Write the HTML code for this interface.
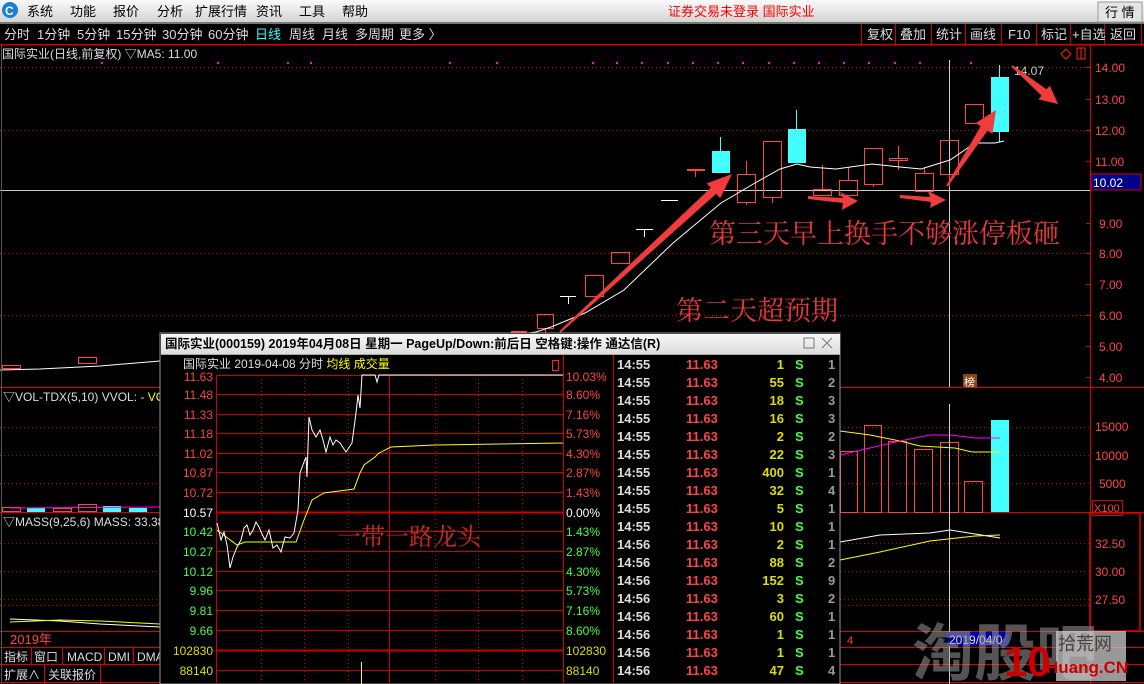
<!DOCTYPE html>
<html><head><meta charset="utf-8"><style>
html,body{margin:0;padding:0;background:#000;width:1144px;height:684px;overflow:hidden}
svg{display:block}
text{font-family:"Liberation Sans","Noto Sans CJK SC",sans-serif}
</style></head><body>
<svg width="1144" height="684" xmlns="http://www.w3.org/2000/svg">
<defs>
<linearGradient id="mg" x1="0" y1="0" x2="0" y2="1"><stop offset="0" stop-color="#fafafa"/><stop offset="1" stop-color="#d4d4d4"/></linearGradient>
<linearGradient id="tg" x1="0" y1="0" x2="0" y2="1"><stop offset="0" stop-color="#f8f8f8"/><stop offset="1" stop-color="#dcdcdc"/></linearGradient>
</defs>
<rect width="1144" height="684" fill="#000"/>
<rect x="0" y="0" width="1144" height="22" fill="url(#mg)"/>
<rect x="0" y="22" width="1144" height="2" fill="#777"/>
<circle cx="10" cy="10" r="8" fill="#1a7fd0"/><text x="5" y="15" font-size="12" font-weight="bold" fill="#fff">C</text>
<g font-size="13" fill="#000">
<text x="27" y="16">系统</text><text x="70" y="16">功能</text><text x="113" y="16">报价</text><text x="157" y="16">分析</text><text x="195" y="16">扩展行情</text><text x="256" y="16">资讯</text><text x="299" y="16">工具</text><text x="342" y="16">帮助</text>
</g>
<text x="668" y="16" font-size="13" fill="#f00">证券交易未登录 国际实业</text>
<rect x="1098" y="2" width="44" height="20" fill="#e4e4e4" stroke="#999"/>
<text x="1105" y="17" font-size="13" fill="#000">行 情</text>
<g font-size="13" fill="#ddd">
<text x="4" y="39">分时</text><text x="37" y="39">1分钟</text><text x="77" y="39">5分钟</text><text x="116" y="39">15分钟</text><text x="162" y="39">30分钟</text><text x="208" y="39">60分钟</text><text x="255" y="39" fill="#3ff">日线</text><text x="289" y="39">周线</text><text x="322" y="39">月线</text><text x="355" y="39">多周期</text><text x="399" y="39">更多 〉</text>
</g>
<g stroke="#c00" stroke-width="1">
<line x1="861.5" y1="24" x2="861.5" y2="44"/><line x1="895.5" y1="24" x2="895.5" y2="44"/><line x1="931.5" y1="24" x2="931.5" y2="44"/><line x1="965.5" y1="24" x2="965.5" y2="44"/><line x1="1001.5" y1="24" x2="1001.5" y2="44"/><line x1="1036.5" y1="24" x2="1036.5" y2="44"/><line x1="1070.5" y1="24" x2="1070.5" y2="44"/><line x1="1104.5" y1="24" x2="1104.5" y2="44"/><line x1="1141.5" y1="24" x2="1141.5" y2="44"/>
</g>
<g font-size="13" fill="#ddd">
<text x="867" y="39">复权</text><text x="900" y="39">叠加</text><text x="936" y="39">统计</text><text x="970" y="39">画线</text><text x="1008" y="39">F10</text><text x="1041" y="39">标记</text><text x="1072" y="39">+自选</text><text x="1110" y="39">返回</text>
</g>
<rect x="0" y="44" width="1144" height="1.5" fill="#d00"/>
<text x="2" y="58" font-size="12" fill="#ddd">国际实业(日线,前复权) ▽MA5: 11.00</text>
<path d="M1066 49 l5 5 -5 5 -5 -5z" fill="none" stroke="#f22"/>
<rect x="1077" y="48" width="8" height="11" fill="none" stroke="#f22"/><line x1="1081" y1="48" x2="1081" y2="59" stroke="#f22"/>
<g fill="#f0f">
<rect x="101" y="62" width="2" height="2"/><rect x="217" y="62" width="2" height="2"/><rect x="287" y="62" width="2" height="2"/><rect x="310" y="62" width="2" height="2"/><rect x="449" y="62" width="2" height="2"/><rect x="496" y="62" width="2" height="2"/><rect x="592" y="62" width="2" height="2"/><rect x="616" y="62" width="2" height="2"/><rect x="641" y="62" width="2" height="2"/><rect x="667" y="62" width="2" height="2"/><rect x="692" y="62" width="2" height="2"/><rect x="717" y="62" width="2" height="2"/><rect x="742" y="62" width="2" height="2"/><rect x="768" y="62" width="2" height="2"/><rect x="793" y="62" width="2" height="2"/><rect x="818" y="62" width="2" height="2"/><rect x="843" y="62" width="2" height="2"/><rect x="868" y="62" width="2" height="2"/><rect x="894" y="62" width="2" height="2"/><rect x="919" y="62" width="2" height="2"/><rect x="970" y="62" width="2" height="2"/>
</g>
<g stroke="#c00" stroke-dasharray="1,3">
<line x1="0" y1="67.5" x2="1090" y2="67.5"/><line x1="0" y1="130.5" x2="1090" y2="130.5"/><line x1="0" y1="253.5" x2="1090" y2="253.5"/><line x1="0" y1="315.5" x2="1090" y2="315.5"/>
</g>
<line x1="1090.5" y1="45" x2="1090.5" y2="684" stroke="#d00"/>
<g font-size="12" fill="#f44">
<text x="1095" y="72">14.00</text><text x="1095" y="104">13.00</text><text x="1095" y="135">12.00</text><text x="1095" y="166">11.00</text><text x="1099" y="228">9.00</text><text x="1099" y="258">8.00</text><text x="1099" y="289">7.00</text><text x="1099" y="320">6.00</text><text x="1099" y="351">5.00</text><text x="1099" y="382">4.00</text>
<text x="1095" y="431">15000</text><text x="1095" y="460">10000</text><text x="1099" y="488">5000</text>
<text x="1095" y="548">32.50</text><text x="1095" y="576">30.00</text><text x="1095" y="604">27.50</text>
</g>
<g stroke="#d00"><line x1="1086" y1="67.5" x2="1090" y2="67.5"/><line x1="1086" y1="99.5" x2="1090" y2="99.5"/><line x1="1086" y1="130.5" x2="1090" y2="130.5"/><line x1="1086" y1="161.5" x2="1090" y2="161.5"/><line x1="1086" y1="223.5" x2="1090" y2="223.5"/><line x1="1086" y1="253.5" x2="1090" y2="253.5"/><line x1="1086" y1="284.5" x2="1090" y2="284.5"/><line x1="1086" y1="315.5" x2="1090" y2="315.5"/><line x1="1086" y1="346.5" x2="1090" y2="346.5"/><line x1="1086" y1="377.5" x2="1090" y2="377.5"/></g>
<line x1="0" y1="190.5" x2="1090" y2="190.5" stroke="#ccc"/>
<line x1="949.5" y1="60" x2="949.5" y2="388" stroke="#ccc"/>
<rect x="1091" y="174" width="50" height="16" fill="#00008b" stroke="#d00"/>
<text x="1093" y="187" font-size="12" fill="#fff">10.02</text>
<g fill="none" stroke="#f44">
<rect x="2.5" y="365.5" width="18" height="3"/><rect x="78.5" y="357.5" width="18" height="6"/>
<rect x="537.5" y="314.5" width="16" height="14"/><line x1="545.5" y1="328" x2="545.5" y2="333"/>
<rect x="585.5" y="275.5" width="18" height="21"/><rect x="611.5" y="252.5" width="18" height="11"/>
<rect x="737.5" y="174.5" width="18" height="28"/><line x1="746.5" y1="161" x2="746.5" y2="174"/><line x1="746.5" y1="202" x2="746.5" y2="205"/>
<rect x="763.5" y="141.5" width="18" height="56"/><line x1="772.5" y1="197" x2="772.5" y2="203"/>
<rect x="813.5" y="189.5" width="18" height="6"/><line x1="822.5" y1="165" x2="822.5" y2="189"/>
<rect x="839.5" y="180.5" width="18" height="15"/><line x1="848.5" y1="167" x2="848.5" y2="180"/>
<rect x="864.5" y="148.5" width="18" height="36"/><line x1="873.5" y1="184" x2="873.5" y2="187"/>
<rect x="889.5" y="158.5" width="18" height="2"/><line x1="898.5" y1="146" x2="898.5" y2="158"/><line x1="898.5" y1="161" x2="898.5" y2="170"/>
<rect x="915.5" y="173.5" width="18" height="18"/><line x1="924.5" y1="168" x2="924.5" y2="173"/>
<rect x="940.5" y="140.5" width="18" height="34"/><line x1="949.5" y1="174" x2="949.5" y2="187"/>
<rect x="965.5" y="104.5" width="18" height="19"/>
</g>
<g fill="#f44"><rect x="687" y="169" width="18" height="2"/><rect x="695" y="170" width="1" height="7"/><rect x="511" y="331" width="16" height="2"/></g>
<g stroke="#fff" fill="none">
<line x1="560" y1="296.5" x2="576" y2="296.5"/><line x1="568.5" y1="296" x2="568.5" y2="304"/>
<line x1="636" y1="229.5" x2="653" y2="229.5"/><line x1="644.5" y1="229" x2="644.5" y2="237"/>
<line x1="661" y1="200.5" x2="678" y2="200.5"/>
</g>
<g fill="#4ff">
<rect x="712" y="151" width="18" height="22"/><rect x="720" y="137" width="1" height="14"/>
<rect x="788" y="129" width="18" height="34"/><rect x="796" y="110" width="1" height="19"/>
<rect x="991" y="77" width="18" height="55"/><rect x="999" y="65" width="1" height="12"/><rect x="999" y="132" width="1" height="10"/>
</g>
<text x="1014" y="75" font-size="12" fill="#ccc">14.07</text>
<polyline fill="none" stroke="#fff" stroke-width="1" points="0,370 40,369 100,366 160,361 300,352 440,342 500,337 536,332 551,327 585,313 624,290 673,243 721,203 755,183 780,169 797,164 810,167 836,169 872,164 900,167 921,169 950,160 975,143 995,143 1004,141"/>
<text x="709" y="243" font-size="27" fill="#e8383a" style="font-family:'Liberation Serif','Noto Serif CJK SC',serif">第三天早上换手不够涨停板砸</text>
<text x="676" y="320" font-size="27" fill="#e8383a" style="font-family:'Liberation Serif','Noto Serif CJK SC',serif">第二天超预期</text>
<g fill="#f03c3c">
<polygon points="560.7,332.7 716.2,193.8 720.2,198.2 732,174 706.8,183.4 710.8,187.8 559.3,331.3"/>
<polygon points="947.8,186.5 987.5,130.7 992.5,133.9 996,110 975.7,123.1 980.7,126.3 946.2,185.5"/>
<polygon points="1011.4,66.8 1041.6,95.6 1038.4,99.4 1058,104 1049.8,85.6 1046.6,89.4 1012.6,65.2"/>
<polygon points="808,196 843,198 840,192 858,201 842,210 843,203 808,199"/>
<polygon points="900,195 930,197 928,191 946,200 930,208 931,202 900,198"/>
</g>
<rect x="963" y="374" width="14" height="14" fill="#8b4513"/>
<text x="964" y="386" font-size="11" fill="#fff">榜</text>
<line x1="0" y1="387.5" x2="1144" y2="387.5" stroke="#d00"/>
<line x1="0" y1="512.5" x2="1144" y2="512.5" stroke="#d00"/>
<line x1="0" y1="631.5" x2="1144" y2="631.5" stroke="#d00"/>
<line x1="0" y1="647.5" x2="1144" y2="647.5" stroke="#d00"/>
<line x1="0" y1="664.5" x2="1144" y2="664.5" stroke="#d00"/>
<line x1="0" y1="682.5" x2="1144" y2="682.5" stroke="#d00"/>
<line x1="1.5" y1="45" x2="1.5" y2="684" stroke="#555"/>
<g stroke="#c00" stroke-dasharray="1,3">
<line x1="0" y1="427.5" x2="1090" y2="427.5"/><line x1="0" y1="455.5" x2="1090" y2="455.5"/><line x1="0" y1="483.5" x2="1090" y2="483.5"/>
<line x1="0" y1="543.5" x2="1090" y2="543.5"/><line x1="0" y1="571.5" x2="1090" y2="571.5"/><line x1="0" y1="599.5" x2="1090" y2="599.5"/><line x1="0" y1="605.5" x2="1090" y2="605.5"/>
</g>
<text x="3" y="401" font-size="12" fill="#ddd">▽VOL-TDX(5,10) VVOL: -  <tspan fill="#ff0">VO</tspan></text>
<text x="3" y="526" font-size="12" fill="#ddd">▽MASS(9,25,6) MASS: 33.38</text>
<g fill="none" stroke="#f44"><rect x="2.5" y="507.5" width="18" height="4"/><rect x="78.5" y="504.5" width="18" height="7"/><rect x="53.5" y="508.5" width="18" height="3"/></g>
<g fill="#4ff"><rect x="27" y="508" width="18" height="4"/><rect x="103" y="506" width="18" height="6"/><rect x="129" y="508" width="18" height="4"/></g>
<line x1="10" y1="508" x2="160" y2="507" stroke="#f0f"/>
<polyline points="10,619 60,621 100,624 160,627" fill="none" stroke="#fff"/>
<polyline points="10,622 60,620 100,621 160,624" fill="none" stroke="#ff0"/>
<text x="10" y="644" font-size="13" fill="#f44">2019年</text>
<g stroke="#d00"><line x1="31.5" y1="647" x2="31.5" y2="664"/><line x1="62.5" y1="647" x2="62.5" y2="664"/><line x1="104.5" y1="647" x2="104.5" y2="664"/><line x1="133.5" y1="647" x2="133.5" y2="664"/><line x1="44.5" y1="664" x2="44.5" y2="684"/><line x1="100.5" y1="664" x2="100.5" y2="684"/></g>
<g font-size="12" fill="#ddd"><text x="4" y="661">指标</text><text x="34" y="661">窗口</text><text x="67" y="661">MACD</text><text x="108" y="661">DMI</text><text x="137" y="661">DMA</text><text x="4" y="679">扩展∧</text><text x="48" y="679">关联报价</text></g>
<g fill="none" stroke="#f44">
<rect x="840.5" y="451.5" width="17" height="61"/><rect x="864.5" y="425.5" width="17" height="87"/><rect x="888.5" y="441.5" width="18" height="71"/><rect x="914.5" y="449.5" width="18" height="63"/><rect x="940.5" y="442.5" width="18" height="70"/><rect x="964.5" y="481.5" width="18" height="31"/>
</g>
<rect x="991" y="420" width="18" height="92" fill="#4ff"/>
<polyline points="840,431 870,435 900,441 920,446 955,448 972,452 1000,452" fill="none" stroke="#ff0"/>
<polyline points="840,455 870,448 900,441 930,435 950,435 975,438 1000,438" fill="none" stroke="#f0f"/>
<rect x="1092.5" y="500.5" width="30" height="15" fill="none" stroke="#d00"/>
<text x="1094" y="512" font-size="11" fill="#f44">X100</text>
<polyline points="840,542 880,535 930,533 950,530 975,534 1000,538" fill="none" stroke="#fff"/>
<polyline points="840,560 880,552 930,541 975,536 1000,535" fill="none" stroke="#ff0"/>
<line x1="949.5" y1="404" x2="949.5" y2="684" stroke="#ccc"/>
<rect x="1090" y="513" width="50" height="118" fill="none" stroke="#d00" stroke-width="1.5"/>
<rect x="947" y="632" width="62" height="14" fill="#0000a0"/>
<text x="949" y="644" font-size="12" fill="#ddd">2019/04/0</text>
<text x="847" y="644" font-size="11" fill="#f44">4</text>
<text x="912" y="675" font-size="62" fill="#999" opacity="0.55" font-weight="bold">淘股吧</text>
<rect x="1056" y="631" width="70" height="50" fill="#ccc" opacity="0.75"/>
<text x="1004" y="676" font-size="42" font-weight="bold" fill="#c00">10</text>
<text x="1058" y="650" font-size="18" fill="#444">拾荒网</text>
<text x="1046" y="673" font-size="17" font-weight="bold" fill="#c00">Huang.CN</text>
<rect x="160" y="333" width="680" height="351" fill="#000" stroke="#999"/>
<rect x="161" y="334" width="679" height="20" fill="url(#tg)"/>
<text x="165" y="348" font-size="12.5" font-weight="bold" fill="#000">国际实业(000159) 2019年04月08日 星期一 PageUp/Down:前后日 空格键:操作 通达信(R)</text>
<rect x="804" y="338" width="10" height="10" fill="none" stroke="#777"/>
<path d="M822 338 l10 10 M832 338 l-10 10" stroke="#777"/>
<line x1="161" y1="354.5" x2="840" y2="354.5" stroke="#aaa"/>
<text x="183" y="368" font-size="12" fill="#ddd">国际实业  2019-04-08 分时 <tspan fill="#ff0">均线 成交量</tspan></text>
<rect x="552.5" y="360.5" width="6" height="10" fill="none" stroke="#f22"/>
<g stroke="#c00">
<line x1="216" y1="375.5" x2="563" y2="375.5"/><line x1="216" y1="394.5" x2="563" y2="394.5"/><line x1="216" y1="414.5" x2="563" y2="414.5"/><line x1="216" y1="433.5" x2="563" y2="433.5"/><line x1="216" y1="453.5" x2="563" y2="453.5"/><line x1="216" y1="472.5" x2="563" y2="472.5"/><line x1="216" y1="492.5" x2="563" y2="492.5"/><line x1="216" y1="512.5" x2="563" y2="512.5" stroke-width="2"/><line x1="216" y1="531.5" x2="563" y2="531.5"/><line x1="216" y1="551.5" x2="563" y2="551.5"/><line x1="216" y1="571.5" x2="563" y2="571.5"/><line x1="216" y1="590.5" x2="563" y2="590.5"/><line x1="216" y1="610.5" x2="563" y2="610.5"/><line x1="216" y1="630.5" x2="563" y2="630.5"/><line x1="216" y1="650.5" x2="563" y2="650.5" stroke-width="2"/><line x1="216" y1="670.5" x2="563" y2="670.5"/>
<line x1="216.5" y1="375" x2="216.5" y2="684"/><line x1="563.5" y1="355" x2="563.5" y2="684"/><line x1="389.5" y1="375" x2="389.5" y2="684"/>
</g>
<g stroke="#c00" stroke-dasharray="1,3"><line x1="261.5" y1="375" x2="261.5" y2="684"/><line x1="304.5" y1="375" x2="304.5" y2="684"/><line x1="348.5" y1="375" x2="348.5" y2="684"/><line x1="435.5" y1="375" x2="435.5" y2="684"/><line x1="478.5" y1="375" x2="478.5" y2="684"/><line x1="522.5" y1="375" x2="522.5" y2="684"/></g>
<g font-size="12" text-anchor="end">
<g fill="#f44"><text x="213" y="381">11.63</text><text x="213" y="399">11.48</text><text x="213" y="419">11.33</text><text x="213" y="438">11.18</text><text x="213" y="458">11.02</text><text x="213" y="477">10.87</text><text x="213" y="497">10.72</text></g>
<text x="213" y="517" fill="#fff">10.57</text>
<g fill="#4f4"><text x="213" y="536">10.42</text><text x="213" y="556">10.27</text><text x="213" y="576">10.12</text><text x="213" y="595">9.96</text><text x="213" y="615">9.81</text><text x="213" y="635">9.66</text></g>
<g fill="#dd0"><text x="213" y="655">102830</text><text x="213" y="675">88140</text></g>
</g>
<g font-size="12">
<g fill="#f44"><text x="566" y="381">10.03%</text><text x="566" y="399">8.60%</text><text x="566" y="419">7.16%</text><text x="566" y="438">5.73%</text><text x="566" y="458">4.30%</text><text x="566" y="477">2.87%</text><text x="566" y="497">1.43%</text></g>
<text x="566" y="517" fill="#fff">0.00%</text>
<g fill="#4f4"><text x="566" y="536">1.43%</text><text x="566" y="556">2.87%</text><text x="566" y="576">4.30%</text><text x="566" y="595">5.73%</text><text x="566" y="615">7.16%</text><text x="566" y="635">8.60%</text></g>
<g fill="#dd0"><text x="566" y="655">102830</text><text x="566" y="675">88140</text></g>
</g>
<polyline fill="none" stroke="#ff0" points="217,530 237,545 245,542 296,542 304,520 312,500 324,493 354,489 360,473 364,465 375,457 379,453 391,447 435,445 563,443"/>
<polyline fill="none" stroke="#fff" points="217,523 221,540 224,532 227,545 230,568 233,557 237,547 241,540 244,528 247,525 250,535 253,530 256,522 259,527 262,534 265,540 269,530 273,548 277,545 281,552 285,537 290,538 294,533 298,510 300,473 304,462 306,457 307,477 309,417 312,430 316,437 320,430 323,440 326,452 330,437 333,445 336,440 340,443 346,452 352,443 356,413 358,395 360,408 362,375 375,375 377,382 379,375 563,375"/>
<line x1="361.5" y1="662" x2="361.5" y2="684" stroke="#ff0"/>
<text x="337" y="545" font-size="24" fill="#d82828" style="font-family:'Liberation Serif','Noto Serif CJK SC',serif">一带一路龙头</text>
<line x1="613.5" y1="355" x2="613.5" y2="684" stroke="#c00"/>
<g font-size="13" font-weight="bold">
<g fill="#ddd">
<text x="617" y="369">14:55</text><text x="617" y="387">14:55</text><text x="617" y="405">14:55</text><text x="617" y="423">14:55</text><text x="617" y="441">14:55</text><text x="617" y="459">14:55</text><text x="617" y="477">14:55</text><text x="617" y="495">14:55</text><text x="617" y="513">14:55</text><text x="617" y="531">14:55</text><text x="617" y="549">14:56</text><text x="617" y="567">14:56</text><text x="617" y="585">14:56</text><text x="617" y="603">14:56</text><text x="617" y="621">14:56</text><text x="617" y="639">14:56</text><text x="617" y="657">14:56</text><text x="617" y="675">14:56</text><text x="617" y="693">14:56</text>
</g>
<g fill="#f44">
<text x="686" y="369">11.63</text><text x="686" y="387">11.63</text><text x="686" y="405">11.63</text><text x="686" y="423">11.63</text><text x="686" y="441">11.63</text><text x="686" y="459">11.63</text><text x="686" y="477">11.63</text><text x="686" y="495">11.63</text><text x="686" y="513">11.63</text><text x="686" y="531">11.63</text><text x="686" y="549">11.63</text><text x="686" y="567">11.63</text><text x="686" y="585">11.63</text><text x="686" y="603">11.63</text><text x="686" y="621">11.63</text><text x="686" y="639">11.63</text><text x="686" y="657">11.63</text><text x="686" y="675">11.63</text><text x="686" y="693">11.63</text>
</g>
<g fill="#dd0" text-anchor="end">
<text x="784" y="369">1</text><text x="784" y="387">55</text><text x="784" y="405">18</text><text x="784" y="423">16</text><text x="784" y="441">2</text><text x="784" y="459">22</text><text x="784" y="477">400</text><text x="784" y="495">32</text><text x="784" y="513">5</text><text x="784" y="531">10</text><text x="784" y="549">2</text><text x="784" y="567">88</text><text x="784" y="585">152</text><text x="784" y="603">3</text><text x="784" y="621">60</text><text x="784" y="639">1</text><text x="784" y="657">1</text><text x="784" y="675">47</text>
</g>
<g fill="#4f4">
<text x="795" y="369">S</text><text x="795" y="387">S</text><text x="795" y="405">S</text><text x="795" y="423">S</text><text x="795" y="441">S</text><text x="795" y="459">S</text><text x="795" y="477">S</text><text x="795" y="495">S</text><text x="795" y="513">S</text><text x="795" y="531">S</text><text x="795" y="549">S</text><text x="795" y="567">S</text><text x="795" y="585">S</text><text x="795" y="603">S</text><text x="795" y="621">S</text><text x="795" y="639">S</text><text x="795" y="657">S</text><text x="795" y="675">S</text>
</g>
<g fill="#999">
<text x="828" y="369">1</text><text x="828" y="387">2</text><text x="828" y="405">3</text><text x="828" y="423">3</text><text x="828" y="441">2</text><text x="828" y="459">3</text><text x="828" y="477">1</text><text x="828" y="495">4</text><text x="828" y="513">1</text><text x="828" y="531">1</text><text x="828" y="549">1</text><text x="828" y="567">2</text><text x="828" y="585">9</text><text x="828" y="603">2</text><text x="828" y="621">1</text><text x="828" y="639">1</text><text x="828" y="657">1</text><text x="828" y="675">4</text>
</g>
</g>
</svg>
</body></html>
